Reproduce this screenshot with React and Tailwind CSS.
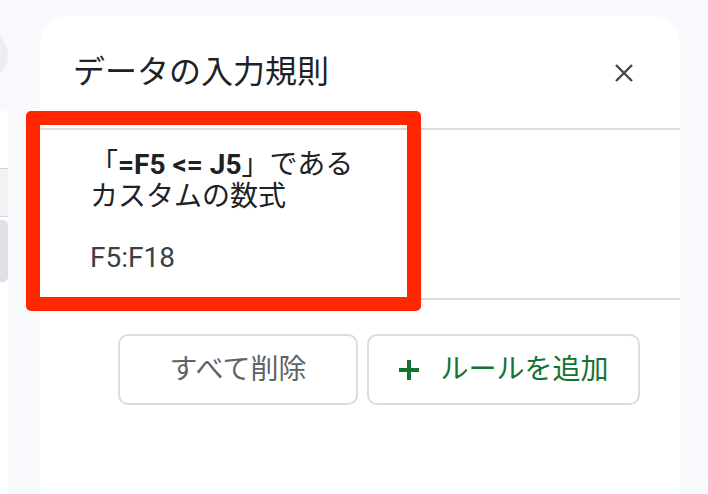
// Data validation side panel (Google Sheets) with a red highlight annotation
const FONT = "font-['Roboto','Noto_Sans_CJK_JP',sans-serif]";

function CloseIcon() {
  return (
    <svg width="20" height="20" viewBox="0 0 20 20" fill="none">
      <path d="M2 2 L18 18 M18 2 L2 18" stroke="#444746" strokeWidth="2.4" strokeLinecap="butt" />
    </svg>
  );
}

function PlusIcon() {
  return (
    <svg width="22" height="22" viewBox="0 0 22 22" fill="none">
      <path d="M11 1 V21 M1 11 H21" stroke="#137333" strokeWidth="4" />
    </svg>
  );
}

// ── Left edge of the sheet, mostly cut off ────────────────────────
function SheetEdge() {
  return (
    <div className="w-[40px] shrink-0 flex flex-col">
      <div className="w-[50px] h-[50px] rounded-full bg-[#eceef3] ml-[-42px] mt-[30px]" />
      <div className="w-[8px] mt-[31px] flex-1 bg-white flex flex-col">
        <div className="h-[57px]" />
        <div className="h-[49px] bg-[#f3f3f3] border-y border-[#d4d4d4]" />
        <div className="h-[62px] mt-[3px] bg-[#dfe1e5] rounded-r-[5px]" />
      </div>
    </div>
  );
}

export default function App() {
  return (
    <div className={`relative w-[708px] h-[494px] overflow-hidden bg-[#f8f9fc] flex ${FONT}`}>
      <SheetEdge />

      <div className="mt-[16px] w-[640px] bg-white rounded-t-[28px] flex flex-col">
        {/* header */}
        <div className="h-[112px] pt-[36px] pl-[33px] pr-[46px] flex items-start justify-between">
          <h1 className="text-[32px] leading-[40px] text-[#202124] font-normal">データの入力規則</h1>
          <div className="mt-[11px]">
            <CloseIcon />
          </div>
        </div>

        {/* rule card */}
        <div className="h-[172px] border-y-2 border-[#dadce0] pl-[50px] pt-[19px] text-[28px] leading-[32px]">
          <div className="text-[#202124]">
            「<span className="font-bold">=F5 &lt;= J5</span>」である
          </div>
          <div className="text-[#202124]">カスタムの数式</div>
          <div className="mt-[29px] text-[#3c4043]">F5:F18</div>
        </div>

        {/* actions */}
        <div className="mt-[34px] pl-[78px] flex gap-[9px]">
          <button className="w-[240px] h-[71px] border-2 border-[#dadce0] rounded-[10px] text-[28px] text-[#5f6368] flex items-center justify-center">
            すべて削除
          </button>
          <button className="w-[273px] h-[71px] border-2 border-[#dadce0] rounded-[10px] text-[28px] text-[#137333] flex items-center justify-center gap-[20px]">
            <PlusIcon />
            <span>ルールを追加</span>
          </button>
        </div>
      </div>

      {/* red annotation frame */}
      <div className="absolute left-[26px] top-[111px] w-[395px] h-[200px] border-[14px] border-[#ff2600] rounded-[5px]" />
    </div>
  );
}
